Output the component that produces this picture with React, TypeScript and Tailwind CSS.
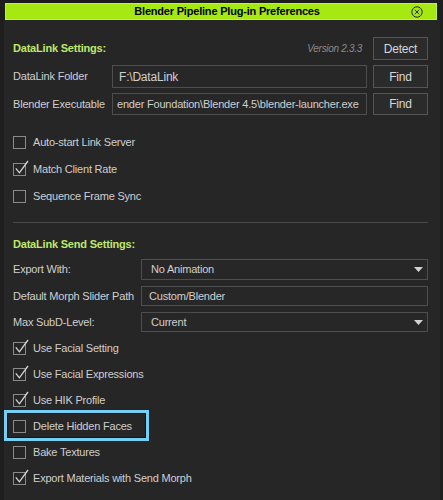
import { FC } from 'react';

type CheckProps = {
    label: string;
    checked?: boolean;
    highlight?: boolean;
    h?: string;
};

const CheckRow: FC<CheckProps> = ({ label, checked, highlight, h = 'h-[26px]' }) => {
    return (
        <div className={`relative flex items-center gap-[7px] ${h}`}>
            {highlight && (
                <div className="absolute left-[-9px] top-[-3px] w-[145px] h-[31px] border-[3px] border-[#74cff4] shadow-[inset_0_0_0_1px_#141414]" />
            )}
            <div className="relative w-[13px] h-[13px] border border-[#8a8a8a] shrink-0">
                {checked && (
                    <svg className="absolute left-[-1px] top-[-1px] overflow-visible" width="13" height="13" viewBox="0 0 13 13">
                        <path d="M2.8 5.4 L6.4 9.8 L15 -2" fill="none" stroke="#d6d6d6" strokeWidth="1.3" />
                    </svg>
                )}
            </div>
            <span className="relative">{label}</span>
        </div>
    );
};

const Btn: FC<{ text: string; h: string }> = ({ text, h }) => (
    <div className={`w-[55px] ${h} shrink-0 border border-[#555555] bg-[#2b2b2b] flex items-center justify-center text-[12px] text-[#d8d8d8]`}>
        {text}
    </div>
);

const Arrow = () => (
    <svg width="9" height="5" viewBox="0 0 9 5" className="shrink-0">
        <polygon points="0,0 9,0 4.5,5" fill="#d2d2d2" />
    </svg>
);

const App: FC = () => {
    return (
        <div className="w-[443px] h-[500px] overflow-hidden bg-[#1e1e1e] pt-[3px] pl-[4px] pr-[3px] font-['Liberation_Sans',Arial,sans-serif] text-[11px] tracking-[-0.2px] text-[#cfcfcf]">
            {/* title bar */}
            <div className="ml-[1px] mr-[3px] h-[17px] bg-[#a6e812] border border-[#bdf04c] relative flex items-center justify-center">
                <span className="text-black font-bold text-[11px] ml-[12px]">Blender Pipeline Plug-in Preferences</span>
                <svg className="absolute right-[13px] top-[2px]" width="12" height="12" viewBox="0 0 12 12">
                    <circle cx="6" cy="6" r="5.2" fill="none" stroke="#2a2a2a" strokeWidth="1" />
                    <path d="M3.8 3.8 L8.2 8.2 M8.2 3.8 L3.8 8.2" stroke="#2a2a2a" strokeWidth="1" />
                </svg>
            </div>

            <div className="bg-[#262626] h-[480px] pl-[9px] pr-[12px] flex flex-col">
                {/* DataLink settings */}
                <div className="mt-[17px] h-[23px] flex items-center">
                    <span className="flex-1 font-bold text-[#bfe86a]">DataLink Settings:</span>
                    <span className="italic text-[10px] tracking-[-0.3px] text-[#8a8a8a] mr-[11px]">Version 2.3.3</span>
                    <Btn text="Detect" h="h-[23px]" />
                </div>

                <div className="mt-[5px] h-[23px] flex items-center gap-[6px]">
                    <span className="w-[93px] shrink-0">DataLink Folder</span>
                    <div className="flex-1 h-full border border-[#4e4e4e] bg-[#272727] flex items-center pl-[6px] text-[12px]">F:\DataLink</div>
                    <Btn text="Find" h="h-[23px]" />
                </div>

                <div className="mt-[5px] h-[22px] flex items-center gap-[6px]">
                    <span className="w-[93px] shrink-0 whitespace-nowrap">Blender Executable</span>
                    <div className="flex-1 h-full border border-[#4e4e4e] bg-[#272727] flex items-center pl-[4px] overflow-hidden whitespace-nowrap">
                        ender Foundation\Blender 4.5\blender-launcher.exe
                    </div>
                    <Btn text="Find" h="h-[22px]" />
                </div>

                <div className="mt-[14px]">
                    <CheckRow label="Auto-start Link Server" h="h-[27px]" />
                    <CheckRow label="Match Client Rate" checked h="h-[27px]" />
                    <CheckRow label="Sequence Frame Sync" h="h-[27px]" />
                </div>

                <div className="mt-[12px] h-[1px] bg-[#4a4a4a]" />

                {/* DataLink send settings */}
                <div className="mt-[14px] h-[14px] flex items-center font-bold text-[#bfe86a]">DataLink Send Settings:</div>

                <div className="mt-[8px] h-[21px] flex items-center">
                    <span className="w-[128px] shrink-0">Export With:</span>
                    <div className="flex-1 h-full border border-[#4e4e4e] bg-[#272727] flex items-center pl-[9px] pr-[4px]">
                        <span className="flex-1">No Animation</span>
                        <Arrow />
                    </div>
                </div>

                <div className="mt-[6px] h-[20px] flex items-center">
                    <span className="w-[128px] shrink-0 whitespace-nowrap">Default Morph Slider Path</span>
                    <div className="flex-1 h-full border border-[#4e4e4e] bg-[#272727] flex items-center pl-[7px]">Custom/Blender</div>
                </div>

                <div className="mt-[6px] h-[20px] flex items-center">
                    <span className="w-[128px] shrink-0">Max SubD-Level:</span>
                    <div className="flex-1 h-full border border-[#4e4e4e] bg-[#272727] flex items-center pl-[9px] pr-[4px]">
                        <span className="flex-1">Current</span>
                        <Arrow />
                    </div>
                </div>

                <div className="mt-[3px]">
                    <CheckRow label="Use Facial Setting" checked />
                    <CheckRow label="Use Facial Expressions" checked />
                    <CheckRow label="Use HIK Profile" checked />
                    <CheckRow label="Delete Hidden Faces" highlight />
                    <CheckRow label="Bake Textures" />
                    <CheckRow label="Export Materials with Send Morph" checked />
                </div>
            </div>
        </div>
    );
};

export default App;
